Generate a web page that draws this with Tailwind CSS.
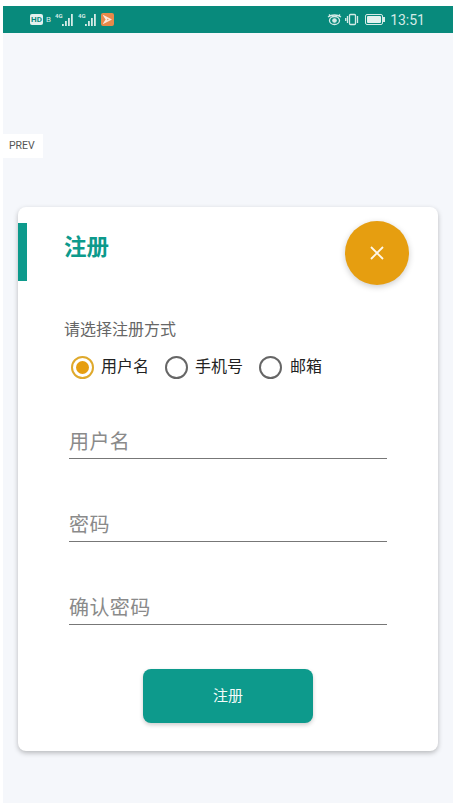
<!DOCTYPE html>
<html lang="zh-CN">
<head>
  <meta charset="UTF-8">
  <meta name="viewport" content="width=device-width, initial-scale=1">
  <title>注册</title>
  <script src="https://cdn.jsdelivr.net/npm/@tailwindcss/browser@4"></script>
</head>
<body class="bg-white font-['Roboto','Noto_Sans_CJK_SC',sans-serif] overflow-hidden">
  <div class="w-[459px] h-[803px] pl-[3px] pr-[6px] pt-[6px]">
    <div class="h-full bg-[#f5f7fb] flex flex-col">
      <!-- status bar -->
      <header class="h-[27px] shrink-0 bg-[#088a7c] flex items-center justify-between pl-[27px] pr-[28px] text-[#d5ebe7]">
        <div class="flex items-center gap-[3px]">
          <span class="w-[13px] h-[11px] rounded-[2px] bg-[#e3f1ee] text-[#088a7c] text-[8px] font-bold leading-[11px] text-center">HD</span>
          <span class="text-[8px] leading-none mr-[1px]">B</span>
          <svg width="20" height="15" viewBox="0 0 20 15" fill="currentColor" aria-hidden="true">
            <text x="0" y="6" font-size="6" font-weight="700">4G</text>
            <rect x="7" y="12" width="1.800" height="2"/><rect x="10" y="9" width="1.800" height="5"/><rect x="13" y="6" width="1.800" height="8"/><rect x="16" y="2" width="1.800" height="12"/>
          </svg>
          <svg width="20" height="15" viewBox="0 0 20 15" fill="currentColor" aria-hidden="true">
            <text x="0" y="6" font-size="6" font-weight="700">4G</text>
            <rect x="7" y="12" width="1.800" height="2"/><rect x="10" y="9" width="1.800" height="5"/><rect x="13" y="6" width="1.800" height="8"/><rect x="16" y="2" width="1.800" height="12"/>
          </svg>
          <span class="w-[13px] h-[13px] rounded-[2px] bg-[#e8894a] flex items-center justify-center">
            <svg width="9" height="9" viewBox="0 0 9 9" fill="none" stroke="#fbe9dc" stroke-width="1.5" aria-hidden="true"><path d="M1.500 1.500 7.500 4.500 1.500 7.500 3.500 4.500Z"/></svg>
          </span>
        </div>
        <div class="flex items-center">
          <svg width="15" height="13" viewBox="0 0 15 13" fill="none" stroke="currentColor" stroke-width="1.300" aria-hidden="true">
            <path d="M1 4C3 2.500 5 2 7.500 2s4.500 .5 6.500 2M2 1.500 3.500 3.200M13 1.500 11.500 3.200"/>
            <ellipse cx="7.500" cy="7.500" rx="5" ry="4"/><circle cx="7.500" cy="7.500" r="1.700" fill="currentColor"/>
          </svg>
          <svg width="14" height="13" viewBox="0 0 14 13" fill="none" stroke="currentColor" stroke-width="1.300" aria-hidden="true" class="ml-[3px]">
            <rect x="4.500" y="1.500" width="6" height="10" rx="1"/>
            <path d="M2.500 3v7M.7 5v3M12.500 3v7"/>
          </svg>
          <span class="ml-[6px] flex items-center">
            <span class="w-[18px] h-[11px] rounded-[2px] border border-[#d5ebe7] p-[1px] block"><span class="block h-full w-full bg-[#e3f1ee] rounded-[1px]"></span></span>
            <span class="w-[2px] h-[5px] bg-[#d5ebe7] block"></span>
          </span>
          <span class="text-[14px] leading-none ml-[5px]">13:51</span>
        </div>
      </header>

      <div class="mt-[101px] w-[40px] h-[24px] bg-white text-[10.500px] leading-[24px] text-[#555] pl-[6px]">PREV</div>

      <!-- card -->
      <main class="relative mt-[49px] mx-[15px] h-[544px] bg-white rounded-[8px] shadow-[0_2px_5px_rgba(0,0,0,0.25)] pt-[16px]">
        <div class="flex items-center h-[58px]">
          <div class="w-[9px] h-full bg-[#0d9a8c]"></div>
          <h1 class="ml-[37px] -mt-[10px] text-[22.500px] leading-[30px] font-bold text-[#0d9a8c]">注册</h1>
        </div>

        <button class="absolute left-[327px] top-[14px] w-[64px] h-[64px] rounded-full bg-[#e69e10] shadow-[0_2px_6px_rgba(0,0,0,0.2)] flex items-center justify-center">
          <svg width="16" height="16" viewBox="0 0 16 16" fill="none" stroke="#fff8ea" stroke-width="1.800" aria-hidden="true"><path d="M2 2 14 14M14 2 2 14"/></svg>
        </button>

        <div class="pl-[46px] pt-[38px]">
          <p class="text-[16px] leading-[22px] text-[#666]">请选择注册方式</p>
          <div class="mt-[14px] ml-[7px] flex items-center h-[24px] text-[16px] text-[#222]">
            <span class="w-[23px] h-[23px] rounded-full border-2 border-[#dfa92c] flex items-center justify-center"><span class="w-[13px] h-[13px] rounded-full bg-[#e69e10]"></span></span>
            <span class="ml-[7px]">用户名</span>
            <span class="ml-[16px] w-[23px] h-[23px] rounded-full border-2 border-[#666]"></span>
            <span class="ml-[7px]">手机号</span>
            <span class="ml-[16px] w-[23px] h-[23px] rounded-full border-2 border-[#666]"></span>
            <span class="ml-[8px]">邮箱</span>
          </div>

          <div class="ml-[5px] w-[318px] mt-[51px] flex flex-col gap-[54px]">
            <div class="h-[29px] border-b border-[#777] text-[20px] leading-[24px] tracking-[0.4px] text-[#8a8a8a]">用户名</div>
            <div class="h-[29px] border-b border-[#777] text-[20px] leading-[24px] tracking-[0.4px] text-[#8a8a8a]">密码</div>
            <div class="h-[29px] border-b border-[#777] text-[20px] leading-[24px] tracking-[0.4px] text-[#8a8a8a]">确认密码</div>
          </div>
        </div>

        <button class="absolute left-[125px] top-[462px] w-[170px] h-[54px] rounded-[8px] bg-[#0d9a8c] shadow-[0_2px_4px_rgba(0,0,0,0.2)] text-[15px] text-[#f4fbfa]">注册</button>
      </main>
    </div>
  </div>
</body>
</html>
